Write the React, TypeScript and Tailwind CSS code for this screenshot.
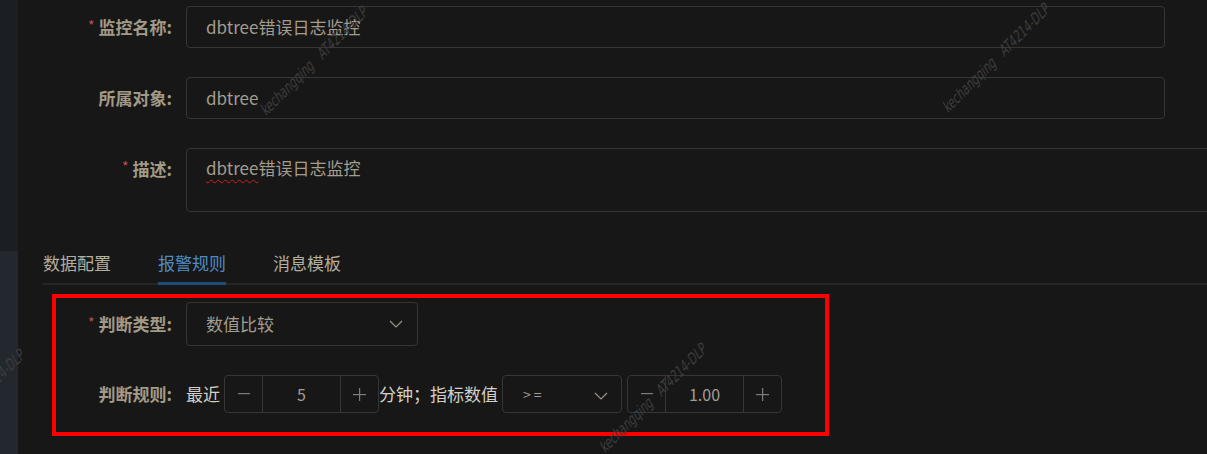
import React from "react";

const font = { fontFamily: '"Noto Sans CJK SC", "Noto Sans", sans-serif' };

function Chevron({ className = "" }: { className?: string }) {
  return (
    <svg width="14" height="8" viewBox="0 0 14 8" className={className} fill="none">
      <path d="M1 1 L7 7 L13 1" stroke="#9a9488" strokeWidth="1.2" />
    </svg>
  );
}

function Stepper({ value }: { value: string }) {
  return (
    <div className="flex h-[38px] w-[155px] shrink-0 items-stretch rounded-[4px] border border-[#363636]">
      <div className="flex w-[38px] items-center justify-center border-r border-[#363636]">
        <svg width="12" height="2" viewBox="0 0 12 2">
          <rect width="12" height="1.2" fill="#7c7c7c" />
        </svg>
      </div>
      <div className="flex flex-1 items-center justify-center text-[16px] text-[#a39d92]">{value}</div>
      <div className="flex w-[38px] items-center justify-center border-l border-[#363636]">
        <svg width="13" height="13" viewBox="0 0 13 13">
          <rect y="6" width="13" height="1.2" fill="#7c7c7c" />
          <rect x="6" width="1.2" height="13" fill="#7c7c7c" />
        </svg>
      </div>
    </div>
  );
}

function Label({ text, required, width }: { text: string; required?: boolean; width: string }) {
  return (
    <div className={`${width} flex shrink-0 items-center justify-end text-[17px] font-bold text-[#a29a86]`}>
      {required && <span className="mr-[4px] -mt-[4px] text-[14px] font-normal text-[#c0504d]">*</span>}
      <span>{text}</span>
    </div>
  );
}

function Watermark({ x, y }: { x: number; y: number }) {
  return (
    <span
      className="pointer-events-none absolute whitespace-pre text-[12px] leading-[14px] text-[#3d3d3d]"
      style={{
        left: x,
        top: y - 14,
        transform: "rotate(-45deg) skewX(-15deg) scaleY(1.3)",
        transformOrigin: "left bottom",
        fontFamily: '"DejaVu Sans Condensed", "Liberation Sans Narrow", sans-serif',
      }}
    >
      {"kechangqing   AT4214-DLP"}
    </span>
  );
}

export default function App() {
  return (
    <div className="relative flex h-[454px] w-[1207px] overflow-hidden bg-[#171717]" style={font}>
      <div className="flex w-[18px] shrink-0 flex-col">
        <div className="h-[251px] bg-[#1b1e22]" />
        <div className="flex-1 bg-[#23272e]" />
      </div>

      <div className="flex min-w-0 flex-1 flex-col">
        <div className="flex flex-col gap-[29px] pt-[6px]">
          <div className="flex items-center gap-[14px]">
            <Label text="监控名称:" required width="w-[154px]" />
            <div className="flex h-[42px] w-[979px] items-center rounded-[4px] border border-[#363636] pl-[19px] text-[17px] text-[#a39d8f]">
              dbtree错误日志监控
            </div>
          </div>
          <div className="flex items-center gap-[14px]">
            <Label text="所属对象:" width="w-[154px]" />
            <div className="flex h-[42px] w-[979px] items-center rounded-[4px] border border-[#363636] pl-[19px] text-[17px] text-[#a39d8f]">
              dbtree
            </div>
          </div>
          <div className="flex items-start gap-[14px]">
            <div className="pt-[8px]">
              <Label text="描述:" required width="w-[154px]" />
            </div>
            <div className="h-[64px] w-[1100px] shrink-0 rounded-[4px] border border-[#363636] pl-[19px] pt-[6px] text-[17px] text-[#a39d8f]">
              <span className="underline decoration-[#d02020] decoration-wavy decoration-1 underline-offset-[4px]">dbtree</span>
              错误日志监控
            </div>
          </div>
        </div>

        <div className="ml-[25px] mt-[38px] flex border-b-2 border-[#262626]">
          <div className="mr-[47px] pb-[8px] text-[17px] leading-[25px] text-[#b4ae9f]">数据配置</div>
          <div className="relative mr-[47px] pb-[8px] text-[17px] leading-[25px] text-[#4f8cc4]">
            报警规则
            <div className="absolute -bottom-[2px] left-0 right-0 h-[3px] bg-[#1e4c7c]" />
          </div>
          <div className="pb-[8px] text-[17px] leading-[25px] text-[#b4ae9f]">消息模板</div>
        </div>

        <div className="ml-[34px] mt-[9px] w-[777px] border-4 border-[#ff0000] pb-[19px] pt-[4px]">
          <div className="flex items-center gap-[14px]">
            <Label text="判断类型:" required width="w-[116px]" />
            <div className="flex h-[44px] w-[232px] items-center justify-between rounded-[4px] border border-[#363636] pl-[19px] pr-[14px] text-[17px] text-[#a39d8f]">
              <span>数值比较</span>
              <Chevron />
            </div>
          </div>
          <div className="mt-[29px] flex items-center">
            <Label text="判断规则:" width="w-[116px]" />
            <span className="ml-[14px] mr-[4px] whitespace-nowrap text-[17px] text-[#d4d0c8]">最近</span>
            <Stepper value="5" />
            <span className="mr-[4px] whitespace-nowrap text-[17px] text-[#d4d0c8]">分钟；指标数值</span>
            <div className="flex h-[38px] w-[120px] shrink-0 items-center justify-between rounded-[4px] border border-[#363636] pl-[20px] pr-[13px] text-[14px] text-[#a39d8f]">
              <span className="tracking-[3px]">&gt;=</span>
              <Chevron className="mt-[4px]" />
            </div>
            <div className="ml-[5px]">
              <Stepper value="1.00" />
            </div>
          </div>
        </div>
      </div>

      <Watermark x={268} y={120} />
      <Watermark x={950} y={117} />
      <Watermark x={607} y={457} />
      <Watermark x={-75} y={463} />
    </div>
  );
}
